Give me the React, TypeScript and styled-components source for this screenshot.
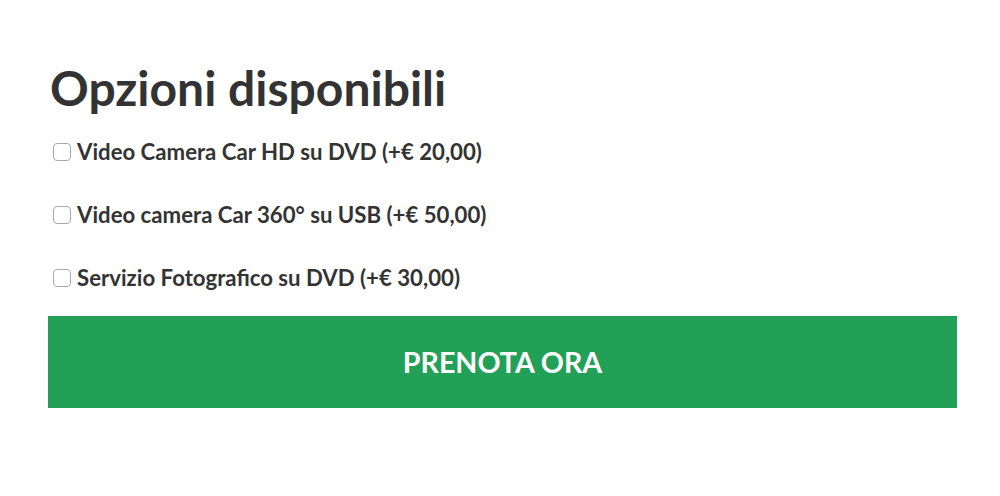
import React from 'react';
import styled, { createGlobalStyle } from 'styled-components';

const GlobalStyle = createGlobalStyle`
  html, body {
    margin: 0;
    padding: 0;
    background: #fff;
  }
  body {
    font-family: Lato, "Open Sans", sans-serif;
    color: #333;
  }
`;

const Wrapper = styled.div`
  padding: 56px 43px 0 48px;
`;

const Title = styled.h2`
  margin: 0 0 0 2px;
  font-size: 48px;
  font-weight: 700;
  line-height: 64px;
  color: #333;
`;

const OptionList = styled.div`
  display: flex;
  flex-direction: column;
  gap: 39px;
  margin-top: 20px;
`;

const Option = styled.label`
  display: flex;
  align-items: center;
  gap: 6px;
  padding-left: 5px;
  font-size: 22.2px;
  font-weight: 700;
  line-height: 24px;
  color: #333;
  cursor: pointer;
`;

const Box = styled.input`
  appearance: none;
  margin: 0;
  width: 18px;
  height: 18px;
  border: 1px solid #a9a9a9;
  border-radius: 4px;
  background: #fff;
`;

const BookButton = styled.button`
  display: block;
  width: 100%;
  height: 92px;
  margin-top: 26px;
  border: none;
  background: #23a057;
  color: #fff;
  font-family: Lato, sans-serif;
  font-size: 28.6px;
  font-weight: 700;
  cursor: pointer;
`;

const options = [
  'Video Camera Car HD su DVD (+€ 20,00)',
  'Video camera Car 360° su USB (+€ 50,00)',
  'Servizio Fotografico su DVD (+€ 30,00)',
];

export default function App() {
  return (
    <>
      <GlobalStyle />
      <Wrapper>
        <Title>Opzioni disponibili</Title>
        <OptionList>
          {options.map((o) => (
            <Option key={o}>
              <Box type="checkbox" />
              {o}
            </Option>
          ))}
        </OptionList>
        <BookButton>PRENOTA ORA</BookButton>
      </Wrapper>
    </>
  );
}
